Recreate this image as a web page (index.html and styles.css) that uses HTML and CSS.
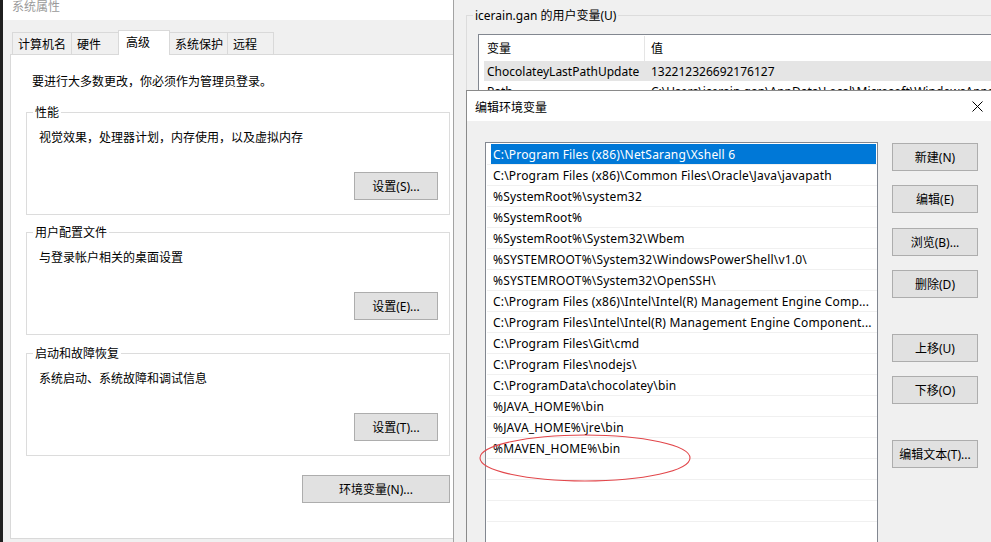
FILE: index.html
```html
<!DOCTYPE html>
<html lang="zh-CN">
<head>
<meta charset="utf-8">
<title>编辑环境变量</title>
<link rel="stylesheet" href="styles.css">
</head>
<body>
<div class="desktop">
  <section class="win-sys">
    <header class="titlebar">系统属性</header>
    <div class="sys-body">
      <nav class="tabs">
        <span class="tab">计算机名</span>
        <span class="tab">硬件</span>
        <span class="tab active">高级</span>
        <span class="tab">系统保护</span>
        <span class="tab">远程</span>
      </nav>
      <div class="tab-panel">
        <p class="note">要进行大多数更改，你必须作为管理员登录。</p>
        <fieldset class="group">
          <legend>性能</legend>
          <p class="desc">视觉效果，处理器计划，内存使用，以及虚拟内存</p>
          <div class="group-actions"><button class="btn btn-set">设置(S)...</button></div>
        </fieldset>
        <fieldset class="group">
          <legend>用户配置文件</legend>
          <p class="desc">与登录帐户相关的桌面设置</p>
          <div class="group-actions"><button class="btn btn-set">设置(E)...</button></div>
        </fieldset>
        <fieldset class="group">
          <legend>启动和故障恢复</legend>
          <p class="desc">系统启动、系统故障和调试信息</p>
          <div class="group-actions"><button class="btn btn-set">设置(T)...</button></div>
        </fieldset>
        <div class="panel-actions"><button class="btn btn-env">环境变量(N)...</button></div>
      </div>
    </div>
  </section>

  <section class="win-env">
    <fieldset class="uv-group">
      <legend>icerain.gan 的用户变量(U)</legend>
      <div class="listview">
        <div class="lv-head"><span class="c1">变量</span><span class="c2">值</span></div>
        <div class="lv-row sel"><span class="c1">ChocolateyLastPathUpdate</span><span class="c2">132212326692176127</span></div>
        <div class="lv-row"><span class="c1">Path</span><span class="c2">C:\Users\icerain.gan\AppData\Local\Microsoft\WindowsApps;</span></div>
      </div>
    </fieldset>
  </section>

  <section class="dialog">
    <header class="dlg-title">
      <span class="dlg-name">编辑环境变量</span>
      <span class="close"><svg width="11" height="11" viewBox="0 0 11 11"><path d="M0.5 0.5L10.5 10.5M10.5 0.5L0.5 10.5" stroke="#000" stroke-width="1" fill="none"/></svg></span>
    </header>
    <div class="dlg-body">
      <ul class="pathlist">
        <li class="sel"><span>C:\Program Files (x86)\NetSarang\Xshell 6</span></li>
        <li><span>C:\Program Files (x86)\Common Files\Oracle\Java\javapath</span></li>
        <li><span>%SystemRoot%\system32</span></li>
        <li><span>%SystemRoot%</span></li>
        <li><span>%SystemRoot%\System32\Wbem</span></li>
        <li><span>%SYSTEMROOT%\System32\WindowsPowerShell\v1.0\</span></li>
        <li><span>%SYSTEMROOT%\System32\OpenSSH\</span></li>
        <li><span>C:\Program Files (x86)\Intel\Intel(R) Management Engine Comp...</span></li>
        <li><span>C:\Program Files\Intel\Intel(R) Management Engine Component...</span></li>
        <li><span>C:\Program Files\Git\cmd</span></li>
        <li><span>C:\Program Files\nodejs\</span></li>
        <li><span>C:\ProgramData\chocolatey\bin</span></li>
        <li><span>%JAVA_HOME%\bin</span></li>
        <li><span>%JAVA_HOME%\jre\bin</span></li>
        <li><span>%MAVEN_HOME%\bin</span></li>
        <li><span></span></li>
        <li><span></span></li>
        <li><span></span></li>
        <li><span></span></li>
        <li><span></span></li>
      </ul>
      <div class="dlg-buttons">
        <button class="btn">新建(N)</button>
        <button class="btn">编辑(E)</button>
        <button class="btn">浏览(B)...</button>
        <button class="btn">删除(D)</button>
        <button class="btn sep">上移(U)</button>
        <button class="btn">下移(O)</button>
        <button class="btn sep">编辑文本(T)...</button>
      </div>
    </div>
  </section>

  <svg class="annot" width="214" height="50" viewBox="0 0 214 50"><ellipse cx="107" cy="25" rx="105" ry="23" fill="none" stroke="#e2474b" stroke-width="1.1"/></svg>
</div>
</body>
</html>
```

FILE: styles.css
```css
* { box-sizing: border-box; }

html, body {
  margin: 0;
  padding: 0;
}

body {
  width: 991px;
  height: 542px;
  overflow: hidden;
  background: #1f1f1f;
  font-family: "Noto Sans", "Noto Sans CJK SC", sans-serif;
  font-size: 12px;
  line-height: 16px;
  color: #000;
}

.desktop {
  position: relative;
  width: 991px;
  height: 542px;
  overflow: hidden;
}

/* ---------- 系统属性 window ---------- */
.win-sys {
  position: absolute;
  left: 3px;
  top: -10px;
  width: 452px;
  height: 560px;
  z-index: 0;
  background: #f0f0f0;
  display: flex;
  flex-direction: column;
}

.titlebar {
  height: 30px;
  flex: none;
  background: #fff;
  color: #9a9a9a;
  padding: 3px 0 0 9px;
  display: flex;
  align-items: center;
}

.sys-body {
  padding: 10px 0 0 7px;
  display: flex;
  flex-direction: column;
}

.tabs {
  display: flex;
  align-items: flex-end;
  height: 24px;
  margin-left: 2px;
}

.tab {
  height: 22px;
  min-width: 48px;
  padding: 2px 5px 0 5px;
  border: 1px solid #d9d9d9;
  border-bottom: none;
  margin-right: -1px;
  background: #f0f0f0;
  line-height: 19px;
  white-space: nowrap;
}

.tab:nth-child(4) {
  padding-right: 4px;
}

.tab:last-child {
  min-width: 47px;
}

.tab.active {
  position: relative;
  z-index: 1;
  height: 25px;
  min-width: 52px;
  padding-left: 7px;
  padding-top: 1px;
  margin-bottom: -1px;
  background: #fff;
  line-height: 22px;
}

.tab-panel {
  width: 446px;
  height: 485px;
  border: 1px solid #d9d9d9;
  background: #fff;
  padding: 19px 0 0 15px;
}

.note {
  margin: 0 0 0 6px;
}

.group {
  width: 424px;
  margin: 9px 0 0 0;
  padding: 0 11px 14px 6px;
  border: 1px solid #dcdcdc;
  min-inline-size: 0;
}

.note + .group {
  margin-top: 14px;
}

.group:nth-of-type(3) {
  margin-top: 10px;
}

.group legend,
.uv-group legend {
  padding: 2px 2px 0 2px;
  height: 16px;
  line-height: 14px;
}

.desc {
  margin: 10px 0 0 6px;
}

.group-actions {
  display: flex;
  justify-content: flex-end;
  margin-top: 26px;
}

.panel-actions {
  width: 424px;
  display: flex;
  justify-content: flex-end;
  margin-top: 19px;
}

.btn {
  font: inherit;
  color: #000;
  height: 28px;
  padding: 2px 0 0 0;
  background: #e1e1e1;
  border: 1px solid #adadad;
  white-space: nowrap;
}

.btn-set { width: 84px; }
.btn-env { width: 148px; }

/* ---------- 环境变量 window ---------- */
.win-env {
  position: absolute;
  left: 453px;
  top: 0;
  width: 560px;
  height: 542px;
  background: #f0f0f0;
  border-left: 1px solid #a3a3a3;
  padding: 7px 0 0 12px;
  overflow: hidden;
}

.uv-group {
  width: 620px;
  height: 400px;
  margin: 0;
  padding: 0 0 0 6px;
  border: 1px solid #dcdcdc;
  min-inline-size: 0;
}

.listview {
  margin: 11px 0 0 5px;
  width: 600px;
  height: 200px;
  border: 1px solid #828790;
  background: #fff;
}

.lv-head {
  display: flex;
  height: 26px;
  line-height: 26px;
  padding-top: 1px;
}

.lv-head .c1 {
  width: 166px;
  padding-left: 8px;
  border-right: 1px solid #e5e5e5;
}

.lv-head .c2 {
  padding-left: 6px;
}

.lv-row {
  display: flex;
  height: 20px;
  line-height: 20px;
  padding-top: 1px;
  margin-left: 5px;
  white-space: nowrap;
}

.lv-row.sel {
  background: #e5e5e5;
}

.lv-row .c1 {
  width: 160px;
  flex: none;
  padding-left: 3px;
}

.lv-row .c2 {
  padding-left: 7px;
}

/* ---------- 编辑环境变量 dialog ---------- */
.dialog {
  position: absolute;
  left: 466px;
  top: 90px;
  width: 535px;
  height: 470px;
  border: 1px solid #8a8a8a;
  background: #f0f0f0;
}

.dlg-title {
  height: 30px;
  background: #fff;
  display: flex;
  align-items: center;
  padding-left: 8px;
}

.dlg-name {
  padding-top: 3px;
}

.close {
  margin-left: auto;
  width: 46px;
  height: 30px;
  display: flex;
  align-items: center;
  justify-content: center;
}

.close svg { display: block; }

.dlg-body {
  display: flex;
  align-items: flex-start;
  padding: 21px 0 0 18px;
}

.pathlist {
  list-style: none;
  margin: 0;
  padding: 1px 0 0 0;
  width: 393px;
  height: 430px;
  border: 1px solid #828790;
  background: #fff;
  overflow: hidden;
}

.pathlist li {
  display: flex;
  height: 21px;
  margin-left: 1px;
  padding: 0 1px 0 4px;
  border-bottom: 1px solid #f0f0f0;
}

.pathlist li span {
  flex: 1;
  min-width: 0;
  padding: 2px 0 0 2px;
  line-height: 18px;
  letter-spacing: 0.18px;
  white-space: nowrap;
  overflow: hidden;
}

.pathlist li.sel span {
  background: #0078d7;
  color: #fff;
}

.dlg-buttons {
  display: flex;
  flex-direction: column;
  gap: 14.33px;
  margin-left: 14px;
  padding-top: 1px;
}

.dlg-buttons .btn {
  width: 86px;
}

.dlg-buttons .btn.sep {
  margin-top: 21.67px;
}

/* ---------- red annotation ---------- */
.annot {
  position: absolute;
  left: 478px;
  top: 433px;
}
```
